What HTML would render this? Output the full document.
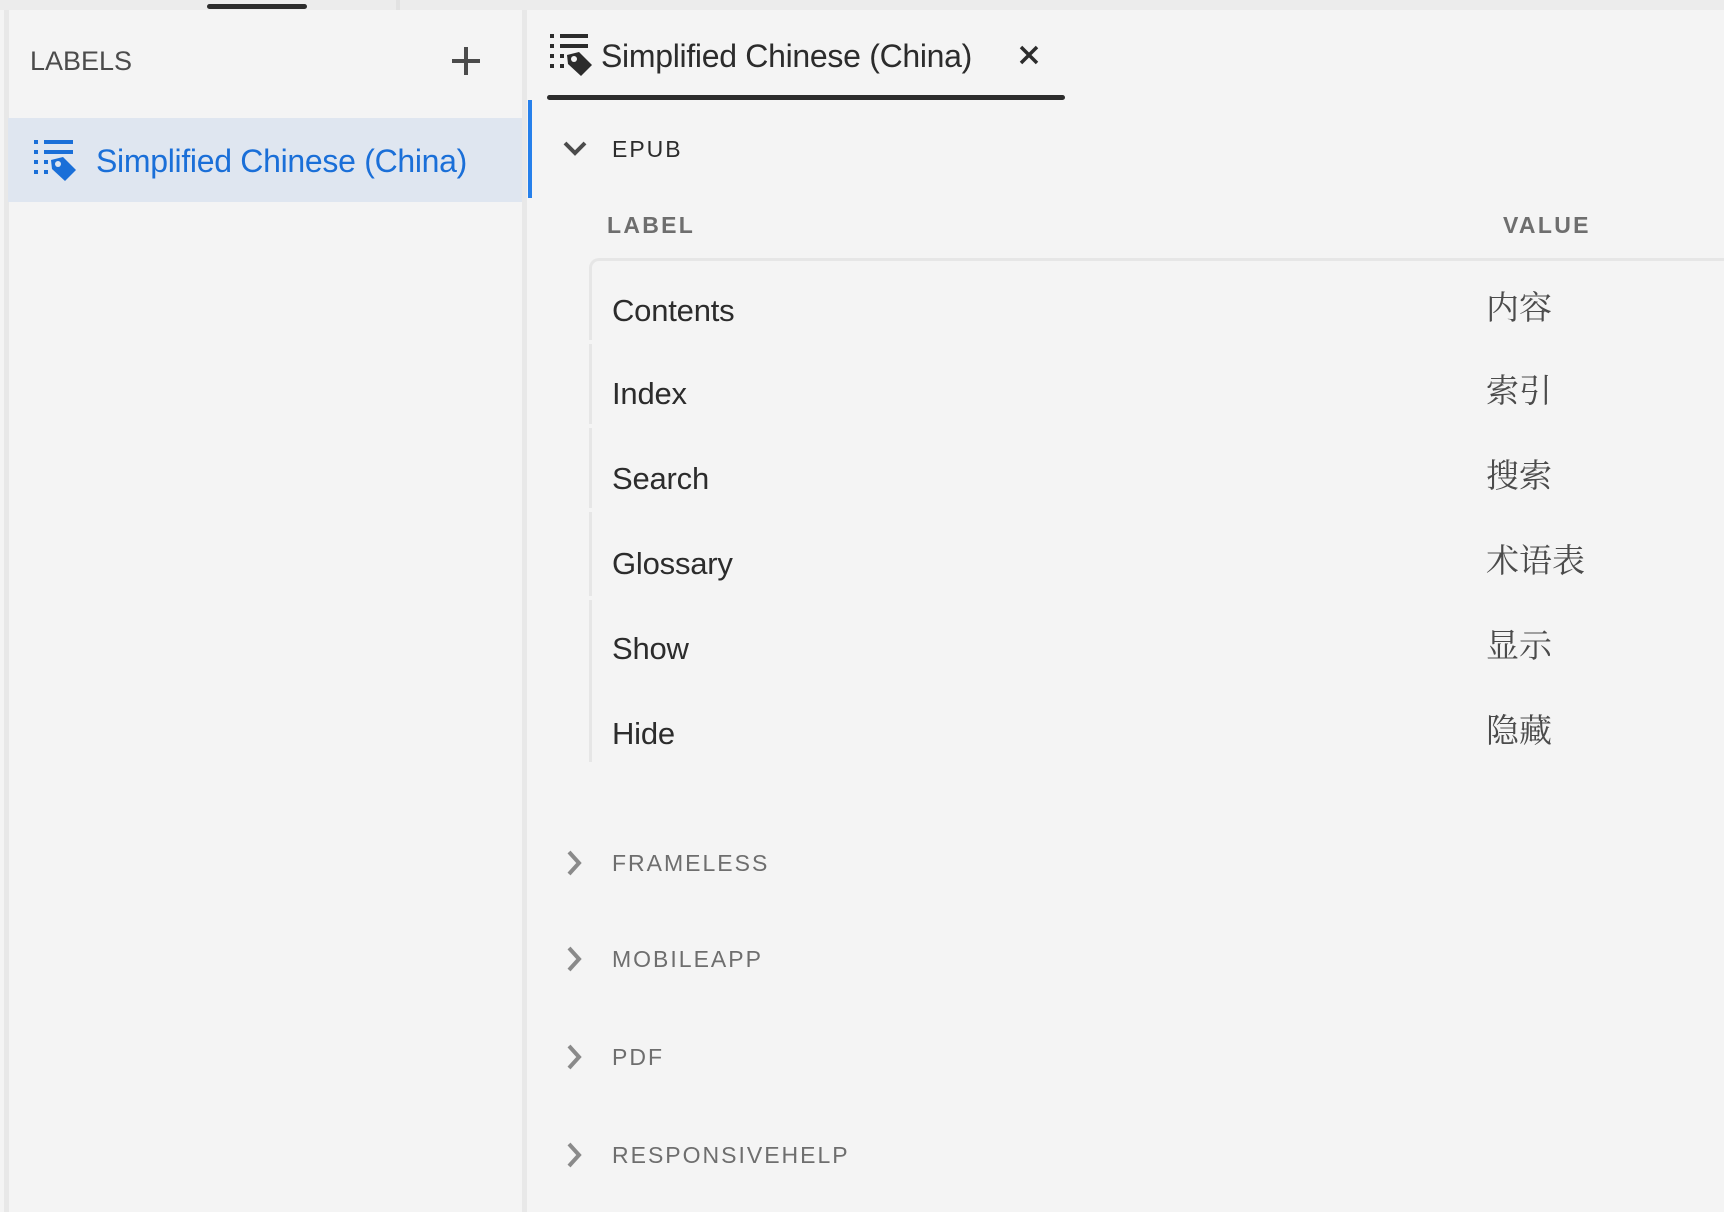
<!DOCTYPE html>
<html><head><meta charset="utf-8"><style>
body{margin:0;width:1724px;height:1212px;background:#f4f4f4;position:relative;overflow:hidden;font-family:"Source Sans Pro","Liberation Sans","Noto Sans CJK SC",sans-serif;}
.a{position:absolute;white-space:nowrap;}
.t{color:#2c2c2c;font-size:31px;line-height:40px;letter-spacing:-0.2px;}
.z{color:#4b4b4b;font-size:33px;line-height:40px;font-family:"Noto Serif CJK SC","Liberation Serif",serif;}
.sec{color:#6e6e6e;font-size:23px;letter-spacing:2px;line-height:30px;}
.lb{position:absolute;left:589px;width:3px;background:#e6e6e6;}
</style></head><body>
<div class="a" style="left:0;top:0;width:1724px;height:10px;background:#ececec"></div>
<div class="a" style="left:207px;top:4px;width:100px;height:5px;background:#2c2c2c;border-radius:3px"></div>
<div class="a" style="left:396px;top:0;width:4px;height:10px;background:#e2e2e2"></div>
<div class="a" style="left:4px;top:10px;width:5px;height:1202px;background:#e8e8e8"></div>
<div class="a" style="left:522px;top:10px;width:5px;height:1202px;background:#e8e8e8"></div>

<div class="a" style="left:30px;top:44px;font-size:27px;color:#4b4b4b;line-height:34px">LABELS</div>
<svg class="a" style="left:449px;top:44px" width="34" height="34" viewBox="0 0 34 34"><path d="M17 3V31M3 17H31" stroke="#4b4b4b" stroke-width="4"/></svg>

<div class="a" style="left:8px;top:118px;width:514px;height:84px;background:#dfe6f0"></div>
<svg class="a" style="left:33px;top:139px" width="44" height="44" viewBox="0 0 44 44" fill="#1a6fd8">
<rect x="1" y="1" width="4" height="4"/><rect x="11" y="1" width="29" height="4"/>
<rect x="1" y="11" width="4" height="4"/><rect x="11" y="11" width="29" height="4"/>
<rect x="1" y="21" width="4" height="4"/><rect x="11" y="21" width="4" height="4"/>
<rect x="1" y="31" width="4" height="4"/><rect x="11" y="31" width="4" height="4"/>
<path d="M18 21L30 18L43 31L32 42L19 30Z"/><circle cx="25" cy="25" r="3" fill="#dfe6f0"/></svg>
<div class="a" style="left:96px;top:141px;font-size:32px;color:#1a6fd8;line-height:40px;letter-spacing:-0.3px">Simplified Chinese (China)</div>
<div class="a" style="left:528px;top:100px;width:4px;height:98px;background:#2680eb"></div>

<svg class="a" style="left:548px;top:33px" width="44" height="44" viewBox="0 0 44 44" fill="#2c2c2c">
<rect x="2" y="1" width="4" height="4"/><rect x="12" y="1" width="28" height="4"/>
<rect x="2" y="11" width="4" height="4"/><rect x="12" y="11" width="28" height="4"/>
<rect x="2" y="21" width="4" height="4"/><rect x="12" y="21" width="4" height="4"/>
<rect x="2" y="31" width="4" height="4"/><rect x="12" y="31" width="4" height="4"/>
<path d="M19 22L31 19L44 32L33 43L20 31Z"/><circle cx="26" cy="26" r="3" fill="#f4f4f4"/></svg>
<div class="a t" style="left:601px;top:36px;font-size:32px;letter-spacing:-0.3px">Simplified Chinese (China)</div>
<svg class="a" style="left:1018px;top:44px" width="22" height="22" viewBox="0 0 22 22"><path d="M3 3L19 19M19 3L3 19" stroke="#2c2c2c" stroke-width="3.5"/></svg>
<div class="a" style="left:547px;top:95px;width:518px;height:5px;background:#2c2c2c;border-radius:3px"></div>

<svg class="a" style="left:562px;top:140px" width="26" height="18" viewBox="0 0 26 18"><path d="M3 3L13 13L23 3" stroke="#4b4b4b" stroke-width="4" fill="none"/></svg>
<div class="a sec" style="left:612px;top:134px;color:#2c2c2c">EPUB</div>

<div class="a" style="left:607px;top:210px;font-size:23px;font-weight:bold;color:#6e6e6e;letter-spacing:2.3px;line-height:30px">LABEL</div>
<div class="a" style="left:1503px;top:210px;font-size:23px;font-weight:bold;color:#6e6e6e;letter-spacing:2.3px;line-height:30px">VALUE</div>
<div class="a" style="left:589px;top:258px;width:1140px;height:20px;border-top:3px solid #e6e6e6;border-left:3px solid #e6e6e6;border-top-left-radius:10px"></div>
<div class="lb" style="top:272px;height:68px"></div>
<div class="lb" style="top:344px;height:80px"></div>
<div class="lb" style="top:428px;height:80px"></div>
<div class="lb" style="top:512px;height:84px"></div>
<div class="lb" style="top:600px;height:84px"></div>
<div class="lb" style="top:684px;height:78px"></div>

<div class="a t" style="left:612px;top:291px">Contents</div><div class="a z" style="left:1486px;top:286px">内容</div>
<div class="a t" style="left:612px;top:374px">Index</div><div class="a z" style="left:1486px;top:369px">索引</div>
<div class="a t" style="left:612px;top:459px">Search</div><div class="a z" style="left:1486px;top:454px">搜索</div>
<div class="a t" style="left:612px;top:544px">Glossary</div><div class="a z" style="left:1486px;top:539px">术语表</div>
<div class="a t" style="left:612px;top:629px">Show</div><div class="a z" style="left:1486px;top:624px">显示</div>
<div class="a t" style="left:612px;top:714px">Hide</div><div class="a z" style="left:1486px;top:709px">隐藏</div>

<svg class="a" style="left:566px;top:849px" width="18" height="28" viewBox="0 0 18 28"><path d="M3 3L13 14L3 25" stroke="#8a8a8a" stroke-width="4" fill="none"/></svg>
<div class="a sec" style="left:612px;top:848px">FRAMELESS</div>
<svg class="a" style="left:566px;top:945px" width="18" height="28" viewBox="0 0 18 28"><path d="M3 3L13 14L3 25" stroke="#8a8a8a" stroke-width="4" fill="none"/></svg>
<div class="a sec" style="left:612px;top:944px">MOBILEAPP</div>
<svg class="a" style="left:566px;top:1043px" width="18" height="28" viewBox="0 0 18 28"><path d="M3 3L13 14L3 25" stroke="#8a8a8a" stroke-width="4" fill="none"/></svg>
<div class="a sec" style="left:612px;top:1042px">PDF</div>
<svg class="a" style="left:566px;top:1141px" width="18" height="28" viewBox="0 0 18 28"><path d="M3 3L13 14L3 25" stroke="#8a8a8a" stroke-width="4" fill="none"/></svg>
<div class="a sec" style="left:612px;top:1140px">RESPONSIVEHELP</div>
</body></html>
